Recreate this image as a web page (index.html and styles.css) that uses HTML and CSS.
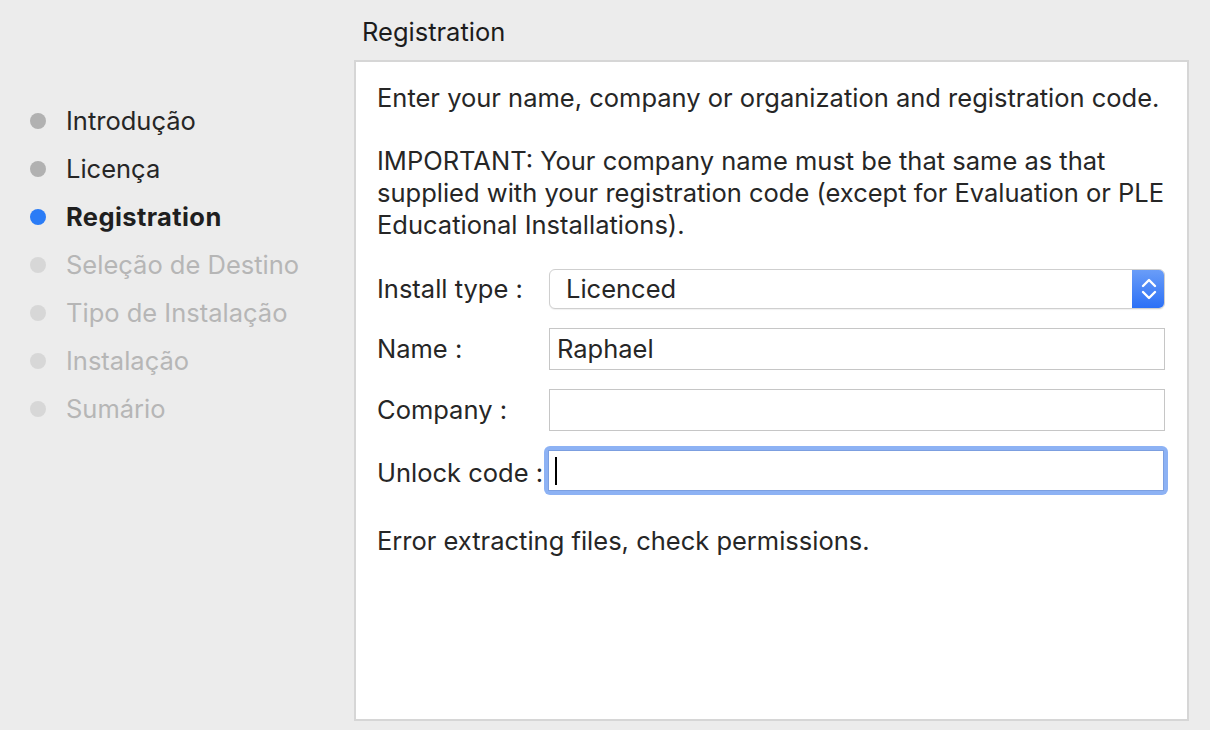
FILE: index.html
```html
<!DOCTYPE html>
<html lang="en">
<head>
    <meta charset="UTF-8">
    <meta name="viewport" content="width=device-width, initial-scale=1.0">
    <title>Registration</title>
    <link rel="stylesheet" href="styles.css">
</head>
<body>
    <div class="window">
        <ul class="steps">
            <li class="step done"><span class="dot"></span>Introdução</li>
            <li class="step done"><span class="dot"></span>Licença</li>
            <li class="step current"><span class="dot"></span>Registration</li>
            <li class="step todo"><span class="dot"></span>Seleção de Destino</li>
            <li class="step todo"><span class="dot"></span>Tipo de Instalação</li>
            <li class="step todo"><span class="dot"></span>Instalação</li>
            <li class="step todo"><span class="dot"></span>Sumário</li>
        </ul>

        <div class="main">
            <h2 class="title">Registration</h2>
            <div class="panel">
                <p class="intro">Enter your name, company or organization and registration code.</p>
                <p class="intro">IMPORTANT: Your company name must be that same as that supplied with your registration code (except for Evaluation or PLE Educational Installations).</p>

                <div class="form">
                    <div class="row">
                        <span class="label">Install type :</span>
                        <div class="select">
                            <span class="select_value">Licenced</span>
                            <span class="stepper">
                                <svg width="18" height="26" viewBox="0 0 18 26">
                                    <path d="M3 10 L9 4 L15 10" fill="none" stroke="#fff" stroke-width="2.4" stroke-linecap="round" stroke-linejoin="round"/>
                                    <path d="M3 16 L9 22 L15 16" fill="none" stroke="#fff" stroke-width="2.4" stroke-linecap="round" stroke-linejoin="round"/>
                                </svg>
                            </span>
                        </div>
                    </div>
                    <div class="row">
                        <span class="label">Name :</span>
                        <div class="field">Raphael</div>
                    </div>
                    <div class="row">
                        <span class="label">Company :</span>
                        <div class="field"></div>
                    </div>
                    <div class="row">
                        <span class="label">Unlock code :</span>
                        <div class="focus_ring">
                            <div class="field focused"><span class="caret"></span></div>
                        </div>
                    </div>
                </div>

                <p class="status">Error extracting files, check permissions.</p>
            </div>
        </div>
    </div>
</body>
</html>
```

FILE: styles.css
```css
html, body {
    margin: 0;
    padding: 0;
    background-color: #ececec;
    font-family: Inter, "Noto Sans", "Liberation Sans", sans-serif;
    font-size: 25.5px;
    line-height: 32px;
    color: #262626;
}
.window {
    display: flex;
    width: 1210px;
    height: 730px;
}

/* left step list */
.steps {
    list-style: none;
    margin: 0;
    padding: 97px 0 0 30px;
    width: 324px;
}
.step {
    display: flex;
    align-items: center;
    height: 48px;
}
.dot {
    width: 16px;
    height: 16px;
    border-radius: 50%;
    margin-right: 20px;
    flex-shrink: 0;
}
.done .dot { background-color: #b1b1b1; }
.current { font-weight: 700; color: #1f1f1f; letter-spacing: 0.4px; }
.current .dot { background-color: #2b7cf6; }
.todo { color: #b6b6b6; }
.todo .dot { background-color: #d7d7d7; }

/* right side */
.main {
    display: flex;
    flex-direction: column;
    width: 835px;
}
.title {
    font-size: 25.5px;
    font-weight: 400;
    line-height: 32px;
    margin: 16px 0 12px 8px;
    color: #1c1c1c;
}
.panel {
    box-sizing: border-box;
    height: 661px;
    background-color: #fff;
    border: 2px solid #d6d6d6;
    padding: 20px 22px 0 21px;
}
.intro {
    margin: 0 0 31px 0;
}
.form {
    display: flex;
    flex-direction: column;
    gap: 19px;
    margin-top: -3px;
}
.row {
    display: flex;
    align-items: center;
}
.label {
    width: 172px;
    flex-shrink: 0;
    white-space: nowrap;
}

.select {
    box-sizing: border-box;
    display: flex;
    align-items: center;
    width: 616px;
    height: 40px;
    border: 1px solid #cfcfcf;
    border-radius: 6px;
    background-color: #fff;
    box-shadow: 0 1px 1px rgba(0, 0, 0, 0.06);
    overflow: hidden;
}
.select_value {
    flex: 1;
    padding-left: 16px;
}
.stepper {
    display: flex;
    align-items: center;
    justify-content: center;
    width: 33px;
    height: 40px;
    margin-right: -1px;
    background: linear-gradient(#6b9ef8, #2a6ff6);
}

.field {
    box-sizing: border-box;
    width: 616px;
    height: 42px;
    border: 1px solid #c6c6c6;
    padding: 4px 7px;
    background-color: #fff;
    display: flex;
    align-items: center;
}
.focus_ring {
    margin-left: -5px;
    margin-top: -4px;
    padding: 4px;
    border-radius: 6px;
    background-color: #8db2f4;
}
.field.focused {
    border-color: #7c9fe0;
    height: 41px;
}
.caret {
    display: block;
    width: 2px;
    height: 28px;
    background-color: #000;
    margin-left: -1px;
}

.status {
    margin: 30px 0 0 0;
}
```
